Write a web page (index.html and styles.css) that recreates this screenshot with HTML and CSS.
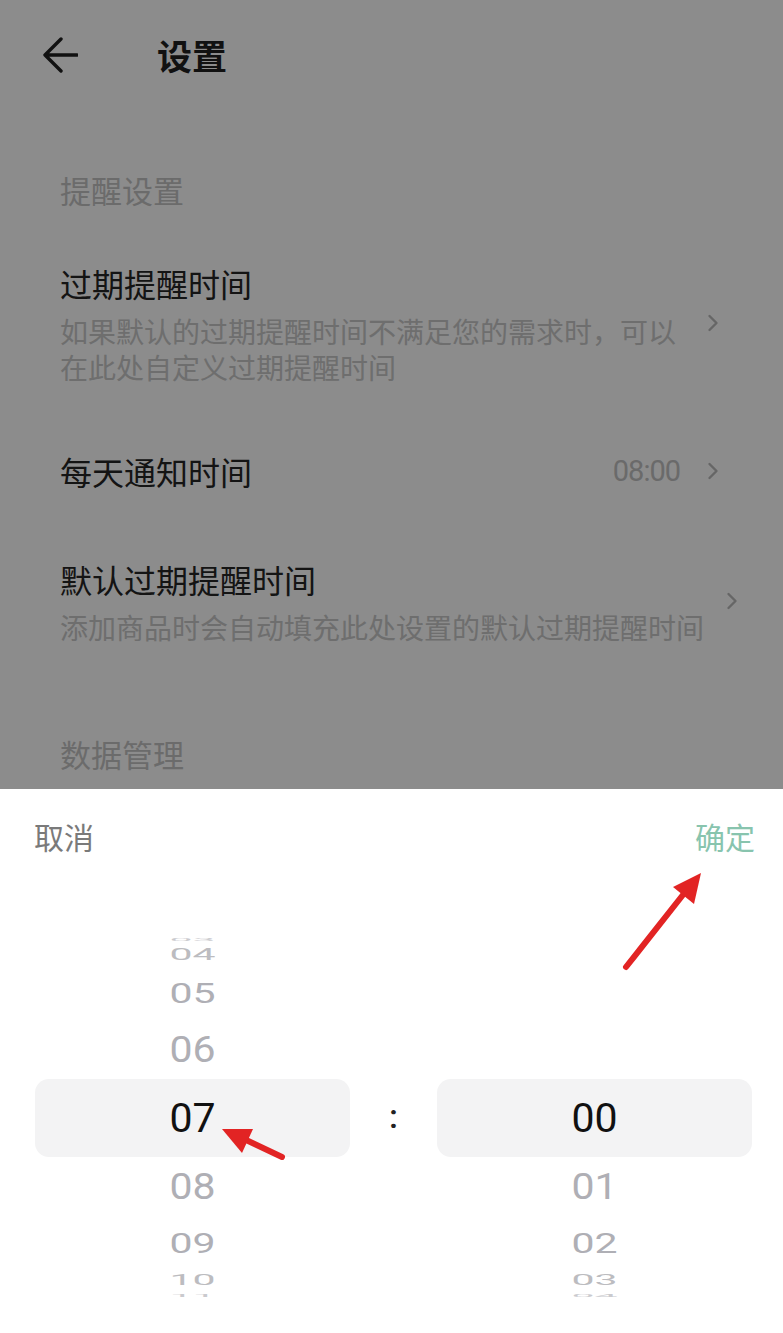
FILE: index.html
```html
<!DOCTYPE html>
<html lang="zh-CN">
<head>
  <meta charset="UTF-8">
  <title>设置</title>
<link rel="stylesheet" href="styles.css">
</head>
<body>
<div class="page">
  <header class="topbar">
    <svg class="back" width="36" height="36" viewBox="0 0 36 36">
      <path d="M35 18H3M19 2L3 18L19 34" fill="none" stroke="#1f1f1f" stroke-width="3.4" stroke-linecap="round" stroke-linejoin="round"/>
    </svg>
    <h1 class="title">设置</h1>
  </header>

  <section class="group">
    <div class="group-title">提醒设置</div>
    <div class="row">
      <div class="row-text">
        <div class="row-title">过期提醒时间</div>
        <div class="row-desc">如果默认的过期提醒时间不满足您的需求时，可以在此处自定义过期提醒时间</div>
      </div>
      <svg class="chev" width="12" height="18" viewBox="0 0 12 18"><path d="M2.5 2L9.5 9L2.5 16" /></svg>
    </div>
    <div class="row">
      <div class="row-text">
        <div class="row-title">每天通知时间</div>
      </div>
      <span class="row-value">08:00</span>
      <svg class="chev" width="12" height="18" viewBox="0 0 12 18"><path d="M2.5 2L9.5 9L2.5 16" /></svg>
    </div>
    <div class="row">
      <div class="row-text">
        <div class="row-title">默认过期提醒时间</div>
        <div class="row-desc nowrap">添加商品时会自动填充此处设置的默认过期提醒时间</div>
      </div>
      <svg class="chev" width="12" height="18" viewBox="0 0 12 18"><path d="M2.5 2L9.5 9L2.5 16" /></svg>
    </div>
  </section>

  <section class="group">
    <div class="group-title">数据管理</div>
  </section>
</div>

<div class="mask"></div>

<div class="sheet">
  <div class="sheet-head">
    <span class="cancel">取消</span>
    <span class="confirm">确定</span>
  </div>
  <div class="picker">
    <div class="wheel">
      <div class="item n4">03</div>
      <div class="item n3">04</div>
      <div class="item n2">05</div>
      <div class="item n1">06</div>
      <div class="item on">07</div>
      <div class="item p1">08</div>
      <div class="item p2">09</div>
      <div class="item p3">10</div>
      <div class="item p4">11</div>
    </div>
    <div class="colon">:</div>
    <div class="wheel">
      <div class="item on">00</div>
      <div class="item p1">01</div>
      <div class="item p2">02</div>
      <div class="item p3">03</div>
      <div class="item p4">04</div>
    </div>
  </div>
</div>

<!-- 标注箭头 -->
<svg class="marks" width="783" height="1333" viewBox="0 0 783 1333">
  <line x1="626" y1="967" x2="686" y2="891" stroke="#e22424" stroke-width="6" stroke-linecap="round"/>
  <polygon points="701,873 673,887 694,904" fill="#e22424"/>
  <line x1="282" y1="1157" x2="244" y2="1139" stroke="#e22424" stroke-width="6" stroke-linecap="round"/>
  <polygon points="222,1129 253,1129 242,1153" fill="#e22424"/>
</svg>
</body>
</html>
```

FILE: styles.css
```css
* {
  box-sizing: border-box;
}
body {
  margin: 0;
  background: #fff;
  font-family: "Noto Sans CJK SC", "Noto Sans", sans-serif;
  color: #262626;
  overflow: hidden;
}
.page {
  min-height: 1333px;
}
.topbar {
  height: 110px;
  display: flex;
  align-items: center;
  padding-left: 42px;
}
.back {
  display: block;
}
.title {
  margin: 0 0 0 79px;
  font-size: 35px;
  font-weight: 700;
  line-height: 44px;
  color: #1f1f1f;
}
.group {
  padding-top: 60px;
}
.group + .group {
  padding-top: 57px;
}
.group-title {
  font-size: 31px;
  line-height: 40px;
  color: #c4c4c4;
  padding-left: 60px;
  margin-bottom: 19px;
}
.row {
  display: flex;
  align-items: center;
  padding: 32px 64px 32px 60px;
}
.row-text {
  flex: 1;
}
.row-title {
  font-size: 32px;
  line-height: 44px;
  color: #262626;
}
.row-desc {
  margin-top: 8px;
  font-size: 28px;
  line-height: 36px;
  color: #c8c8c8;
}
.row-desc.nowrap {
  white-space: nowrap;
}
.row-value {
  font-family: Roboto, sans-serif;
  font-size: 29px;
  letter-spacing: -1px;
  color: #c2c2c2;
  margin-right: 5px;
}
.chev {
  flex: none;
  margin-left: 22px;
}
.chev path {
  fill: none;
  stroke: #bababa;
  stroke-width: 2.4;
  stroke-linecap: round;
  stroke-linejoin: round;
}
.mask {
  position: fixed;
  left: 0;
  top: 0;
  right: 0;
  bottom: 0;
  background: rgba(0, 0, 0, .45);
}
.sheet {
  position: fixed;
  left: 0;
  right: 0;
  bottom: 0;
  height: 544px;
  background: #fff;
}
.sheet-head {
  display: flex;
  justify-content: space-between;
  padding: 27px 28px 0 34px;
  font-size: 30px;
  line-height: 40px;
}
.cancel {
  color: #7a7a7a;
}
.confirm {
  color: #88c4ae;
}
.picker {
  display: flex;
  margin-top: 82px;
  padding: 0 31px 0 35px;
}
.wheel {
  position: relative;
  width: 315px;
  height: 360px;
  overflow: hidden;
  font-family: Roboto, sans-serif;
  font-size: 41px;
}
.wheel::before {
  content: '';
  position: absolute;
  left: 0;
  right: 0;
  top: 141px;
  height: 78px;
  border-radius: 14px;
  background: #f3f3f4;
}
.colon {
  width: 87px;
  display: flex;
  align-items: center;
  justify-content: center;
  font-family: Roboto, sans-serif;
  font-size: 34px;
  font-weight: 500;
  color: #222;
  padding-bottom: 4px;
}
.item {
  position: absolute;
  left: 0;
  right: 0;
  top: 150px;
  height: 60px;
  line-height: 60px;
  text-align: center;
  color: #afafb5;
}
.item.on {
  color: #111;
}
.n4 { transform: translateY(-178px) scaleY(.1); color: #cacace; }
.n3 { transform: translateY(-164px) scaleY(.4); color: #bcbcc0; }
.n2 { transform: translateY(-125px) scaleY(.68); }
.n1 { transform: translateY(-68px) scaleY(.88); }
.p1 { transform: translateY(69px) scaleY(.88); }
.p2 { transform: translateY(125px) scaleY(.68); }
.p3 { transform: translateY(162px) scaleY(.36); color: #bcbcc0; }
.p4 { transform: translateY(178px) scaleY(.1); color: #cacace; }
.marks {
  position: fixed;
  left: 0;
  top: 0;
  pointer-events: none;
}
```
